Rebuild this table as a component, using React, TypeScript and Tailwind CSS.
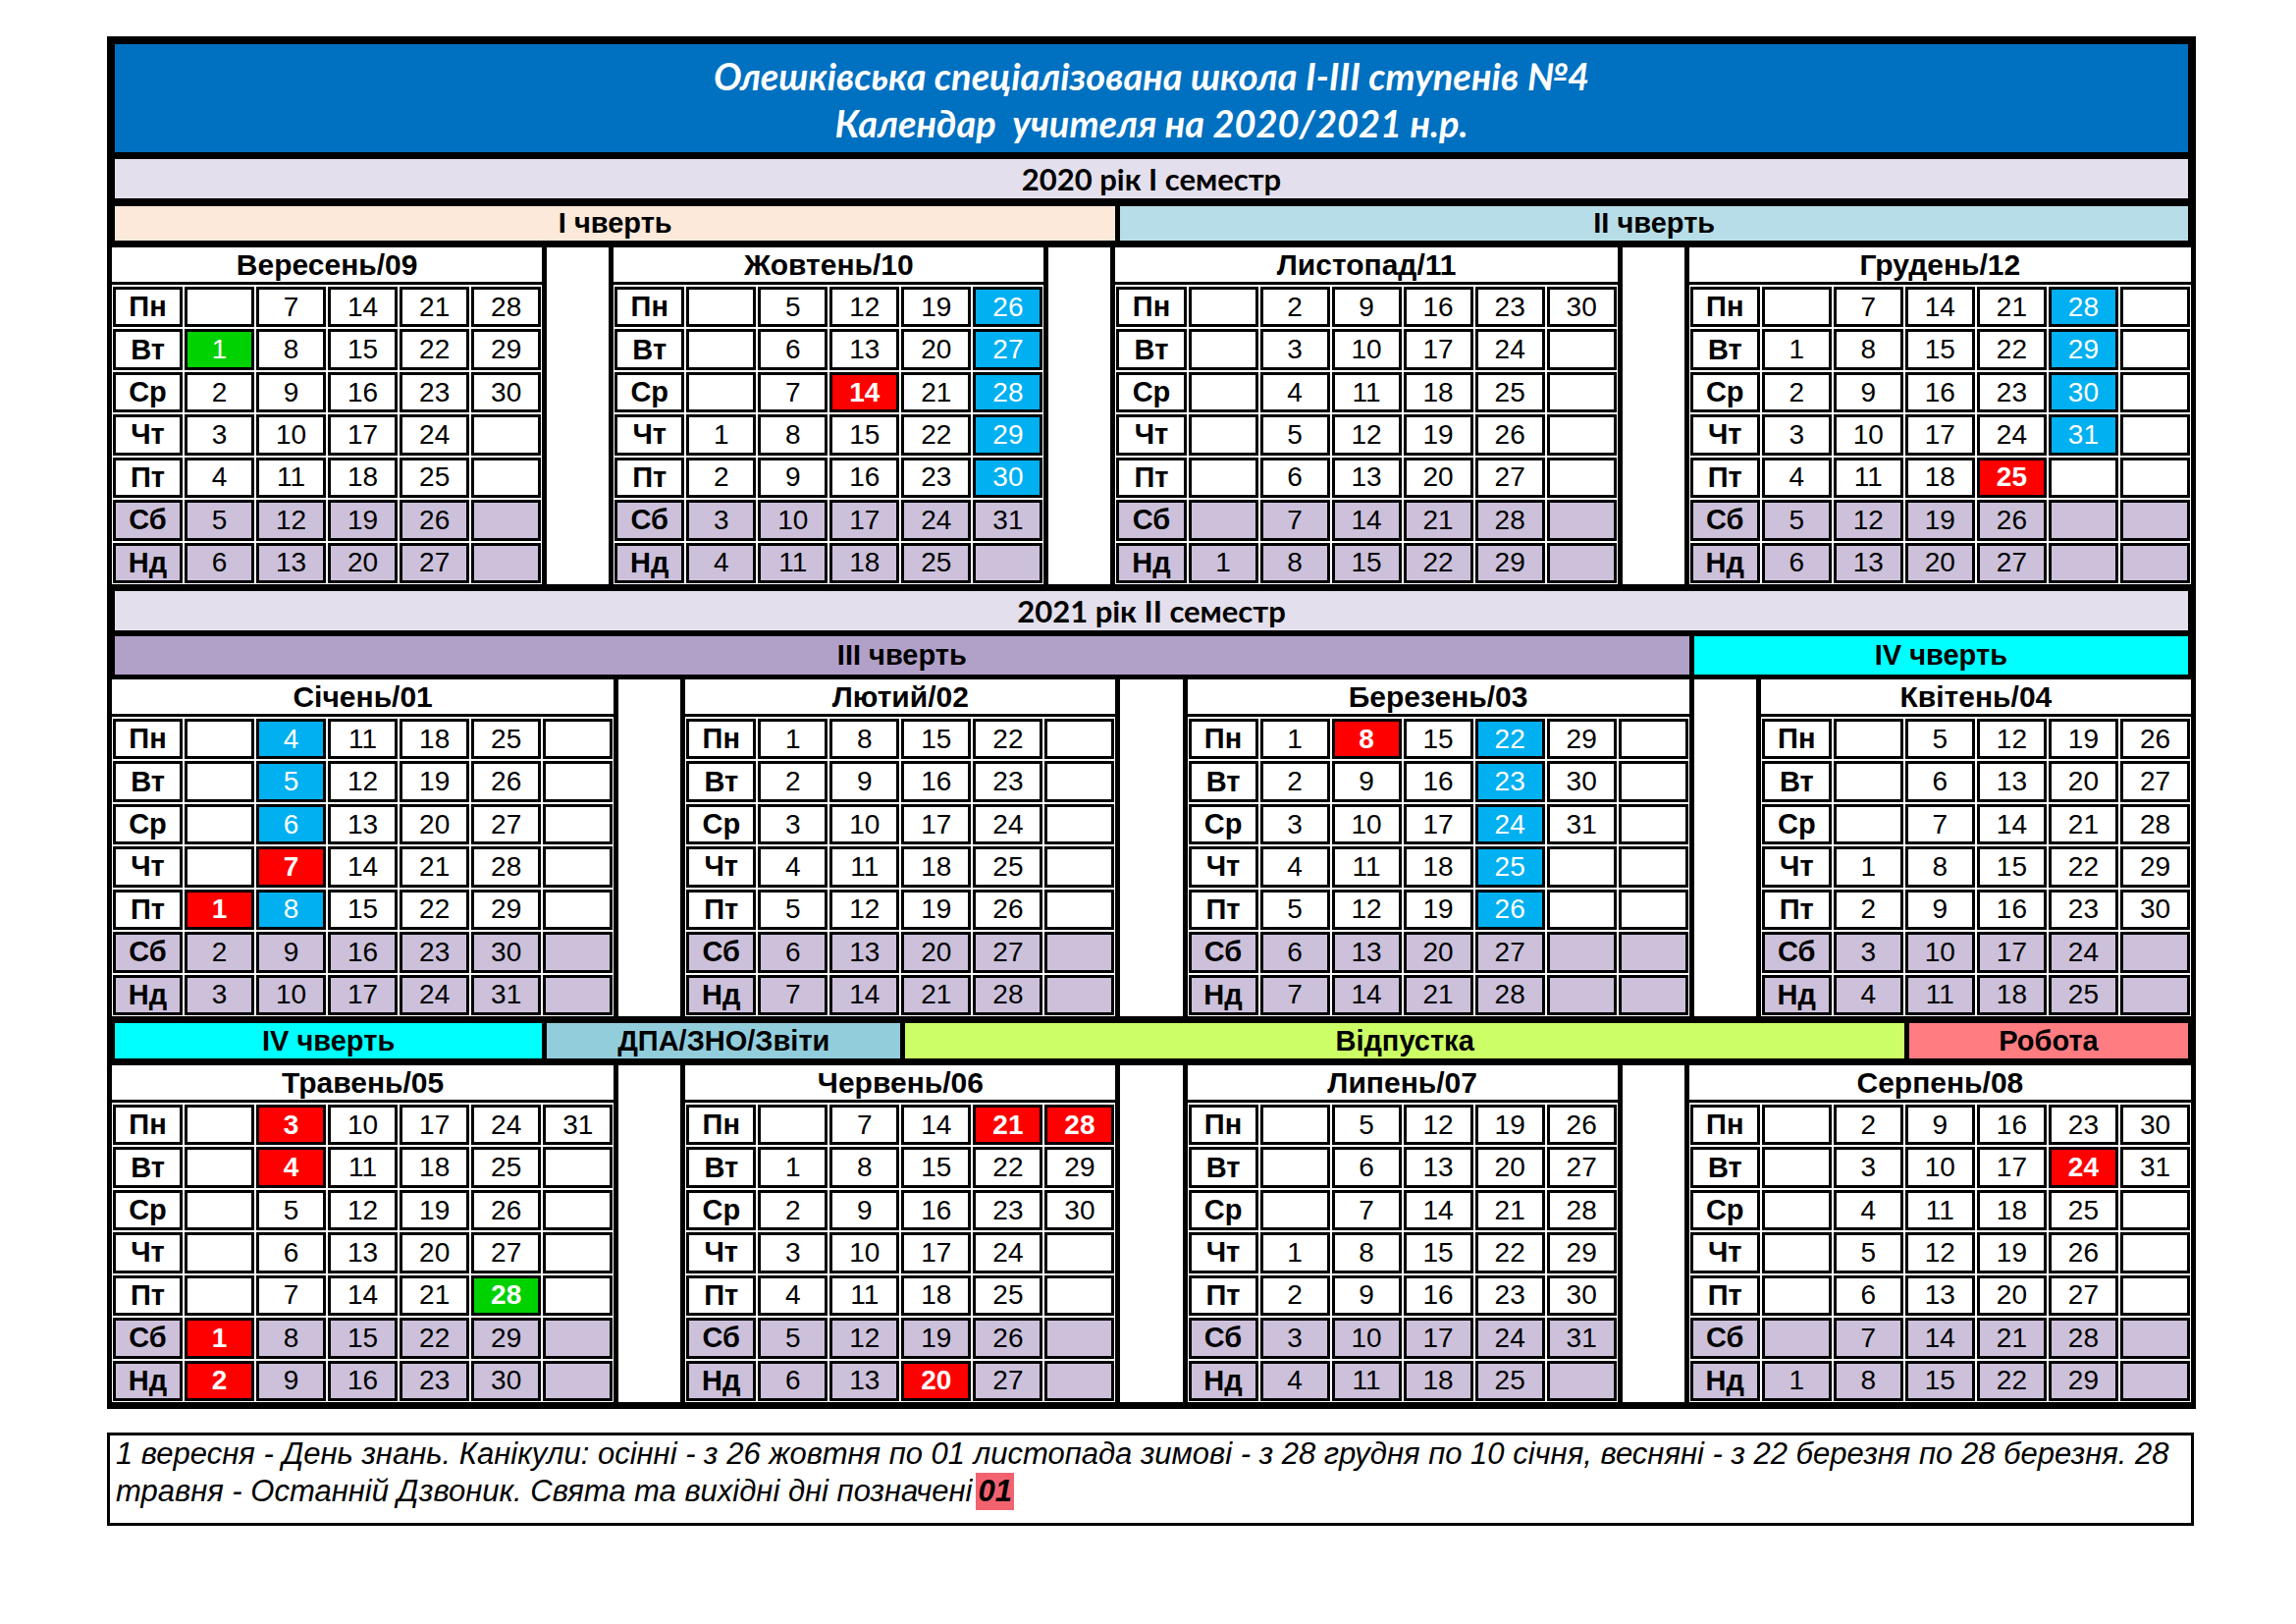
import React from 'react';

type M = { name: string; cols: 6 | 7; rows: string[] };
type Item = M | 'sp';

const S1: Item[] = [
  { name: 'Вересень/09', cols: 6, rows: ['_ 7 14 21 28', '1g 8 15 22 29', '2 9 16 23 30', '3 10 17 24 _', '4 11 18 25 _', '5 12 19 26 _', '6 13 20 27 _'] },
  'sp',
  { name: 'Жовтень/10', cols: 6, rows: ['_ 5 12 19 26c', '_ 6 13 20 27c', '_ 7 14r 21 28c', '1 8 15 22 29c', '2 9 16 23 30c', '3 10 17 24 31', '4 11 18 25 _'] },
  'sp',
  { name: 'Листопад/11', cols: 7, rows: ['_ 2 9 16 23 30', '_ 3 10 17 24 _', '_ 4 11 18 25 _', '_ 5 12 19 26 _', '_ 6 13 20 27 _', '_ 7 14 21 28 _', '1 8 15 22 29 _'] },
  'sp',
  { name: 'Грудень/12', cols: 7, rows: ['_ 7 14 21 28c _', '1 8 15 22 29c _', '2 9 16 23 30c _', '3 10 17 24 31c _', '4 11 18 25r _ _', '5 12 19 26 _ _', '6 13 20 27 _ _'] },
];

const S2: Item[] = [
  { name: 'Січень/01', cols: 7, rows: ['_ 4c 11 18 25 _', '_ 5c 12 19 26 _', '_ 6c 13 20 27 _', '_ 7r 14 21 28 _', '1r 8c 15 22 29 _', '2 9 16 23 30 _', '3 10 17 24 31 _'] },
  'sp',
  { name: 'Лютий/02', cols: 6, rows: ['1 8 15 22 _', '2 9 16 23 _', '3 10 17 24 _', '4 11 18 25 _', '5 12 19 26 _', '6 13 20 27 _', '7 14 21 28 _'] },
  'sp',
  { name: 'Березень/03', cols: 7, rows: ['1 8r 15 22c 29 _', '2 9 16 23c 30 _', '3 10 17 24c 31 _', '4 11 18 25c _ _', '5 12 19 26c _ _', '6 13 20 27 _ _', '7 14 21 28 _ _'] },
  'sp',
  { name: 'Квітень/04', cols: 6, rows: ['_ 5 12 19 26', '_ 6 13 20 27', '_ 7 14 21 28', '1 8 15 22 29', '2 9 16 23 30', '3 10 17 24 _', '4 11 18 25 _'] },
];

const S3: Item[] = [
  { name: 'Травень/05', cols: 7, rows: ['_ 3r 10 17 24 31', '_ 4r 11 18 25 _', '_ 5 12 19 26 _', '_ 6 13 20 27 _', '_ 7 14 21 28G _', '1r 8 15 22 29 _', '2r 9 16 23 30 _'] },
  'sp',
  { name: 'Червень/06', cols: 6, rows: ['_ 7 14 21r 28r', '1 8 15 22 29', '2 9 16 23 30', '3 10 17 24 _', '4 11 18 25 _', '5 12 19 26 _', '6 13 20r 27 _'] },
  'sp',
  { name: 'Липень/07', cols: 6, rows: ['_ 5 12 19 26', '_ 6 13 20 27', '_ 7 14 21 28', '1 8 15 22 29', '2 9 16 23 30', '3 10 17 24 31', '4 11 18 25 _'] },
  'sp',
  { name: 'Серпень/08', cols: 7, rows: ['_ 2 9 16 23 30', '_ 3 10 17 24r 31', '_ 4 11 18 25 _', '_ 5 12 19 26 _', '_ 6 13 20 27 _', '_ 7 14 21 28 _', '1 8 15 22 29 _'] },
];

const spanCls: Record<number, string> = { 6: 'col-span-6', 7: 'col-span-7' };
const gridCls: Record<number, string> = { 6: 'grid-cols-6', 7: 'grid-cols-7' };
const DAYS = ['Пн', 'Вт', 'Ср', 'Чт', 'Пт', 'Сб', 'Нд'];

function DayCell({ tok, weekend }: { tok: string; weekend: boolean }) {
  let v = tok;
  let kind = '';
  if (tok === '_') v = '';
  else {
    const last = tok.slice(-1);
    if (last === 'r' || last === 'c' || last === 'g' || last === 'G') {
      kind = last;
      v = tok.slice(0, -1);
    }
  }
  let bg = weekend ? 'bg-[#ccc0da]' : 'bg-white';
  let txt = 'text-black';
  let weight = 'font-normal';
  if (kind === 'r') {
    bg = 'bg-[#ff0000]';
    txt = 'text-white';
    weight = 'font-bold';
  } else if (kind === 'c') {
    bg = 'bg-[#00b0f0]';
    txt = 'text-white';
  } else if (kind === 'g') {
    bg = 'bg-[#00d100]';
    txt = 'text-white';
  } else if (kind === 'G') {
    bg = 'bg-[#00d100]';
    txt = 'text-white';
    weight = 'font-bold';
  }
  return (
    <div className={`m-px flex items-center justify-center border-[3px] border-black text-[28px] leading-none ${bg} ${txt} ${weight}`}>
      {v}
    </div>
  );
}

function Month({ m }: { m: M }) {
  return (
    <div className={`${spanCls[m.cols]} flex min-w-0 flex-col`}>
      <div className="flex h-[38px] items-center justify-center border-b-[3px] border-black bg-white text-[30px] font-bold leading-none">
        {m.name}
      </div>
      <div className={`mt-px grid flex-1 grid-rows-7 ${gridCls[m.cols]}`}>
        {m.rows.map((r, ri) => {
          const weekend = ri >= 5;
          const toks = r.split(' ');
          return (
            <React.Fragment key={ri}>
              <div
                className={`m-px flex items-center justify-center border-[3px] border-black text-[29px] font-bold leading-none ${weekend ? 'bg-[#ccc0da]' : 'bg-white'}`}
              >
                {DAYS[ri]}
              </div>
              {toks.map((t, ti) => (
                <DayCell key={ti} tok={t} weekend={weekend} />
              ))}
            </React.Fragment>
          );
        })}
      </div>
    </div>
  );
}

function Section({ items, cls }: { items: Item[]; cls: string }) {
  return (
    <div className={`grid h-[343px] grid-cols-[repeat(29,minmax(0,1fr))] bg-white ${cls}`}>
      {items.map((it, i) =>
        it === 'sp' ? (
          <div key={i} className="col-span-1 border-x-[5px] border-black bg-white" />
        ) : (
          <Month key={i} m={it} />
        )
      )}
    </div>
  );
}

export default function App() {
  return (
    <div className="min-h-[1654px] w-[2339px] bg-white pl-[109px] pt-[37px] [font-family:'Liberation_Sans',Arial,sans-serif] text-black">
      <div className="flex w-[2128px] flex-col bg-black px-[5px] pb-[7px] pt-[8px]">
        <div className="mx-[3px] flex h-[110px] flex-col items-center bg-[#0070c0] pt-[8px] [font-family:Lato,sans-serif] text-[38px] font-bold italic leading-[48px] text-white">
          <div>Олешківська спеціалізована школа І-ІІІ ступенів №4</div>
          <div className="whitespace-pre">Календар  учителя на 2020/2021 н.р.</div>
        </div>

        <div className="mx-[3px] mt-[7px] flex h-[40px] items-center justify-center bg-[#e4dfec] [font-family:Lato,sans-serif] text-[31px] font-bold leading-none">
          2020 рік І семестр
        </div>

        <div className="mt-[8px] grid h-[35px] grid-cols-[repeat(29,minmax(0,1fr))] text-[29px] font-bold leading-none">
          <div className="col-span-14 ml-[3px] flex items-center justify-center bg-[#fde9d9]">І чверть</div>
          <div className="col-span-15 mr-[3px] flex items-center justify-center border-l-[5px] border-black bg-[#b7dee8]">ІІ чверть</div>
        </div>

        <Section items={S1} cls="mt-[7px]" />

        <div className="mx-[3px] mt-[7px] flex h-[40px] items-center justify-center bg-[#e4dfec] [font-family:Lato,sans-serif] text-[31px] font-bold leading-none">
          2021 рік ІІ семестр
        </div>

        <div className="mt-[6px] grid h-[39px] grid-cols-[repeat(29,minmax(0,1fr))] text-[29px] font-bold leading-none">
          <div className="col-span-22 ml-[3px] flex items-center justify-center bg-[#b1a0c7]">ІІІ чверть</div>
          <div className="col-span-7 mr-[3px] flex items-center justify-center border-l-[5px] border-black bg-[#00ffff]">IV чверть</div>
        </div>

        <Section items={S2} cls="mt-[5px]" />

        <div className="mt-[7px] grid h-[36px] grid-cols-[repeat(29,minmax(0,1fr))] text-[29px] font-bold leading-none">
          <div className="col-span-6 ml-[3px] flex items-center justify-center bg-[#00ffff]">IV чверть</div>
          <div className="col-span-5 flex items-center justify-center border-l-[5px] border-black bg-[#92cddc]">ДПА/ЗНО/Звіти</div>
          <div className="col-span-14 flex items-center justify-center border-l-[5px] border-black bg-[#ccff66]">Відпустка</div>
          <div className="col-span-4 mr-[3px] flex items-center justify-center border-l-[5px] border-black bg-[#ff7c80]">Робота</div>
        </div>

        <Section items={S3} cls="mt-[7px]" />
      </div>

      <div className="mt-[24px] h-[95px] w-[2126px] border-[3px] border-black px-[6px] text-[31px] italic leading-[38px]">
        <div className="whitespace-nowrap">
          1 вересня - День знань. Канікули: осінні - з 26 жовтня по 01 листопада зимові - з 28 грудня по 10 січня, весняні - з 22 березня по 28 березня. 28
        </div>
        <div className="flex items-stretch whitespace-nowrap">
          <span>травня - Останній Дзвоник. Свята та вихідні дні позначені</span>
          <span className="ml-[4px] bg-[#f2626f] px-[2px] font-bold">01</span>
        </div>
      </div>
    </div>
  );
}
